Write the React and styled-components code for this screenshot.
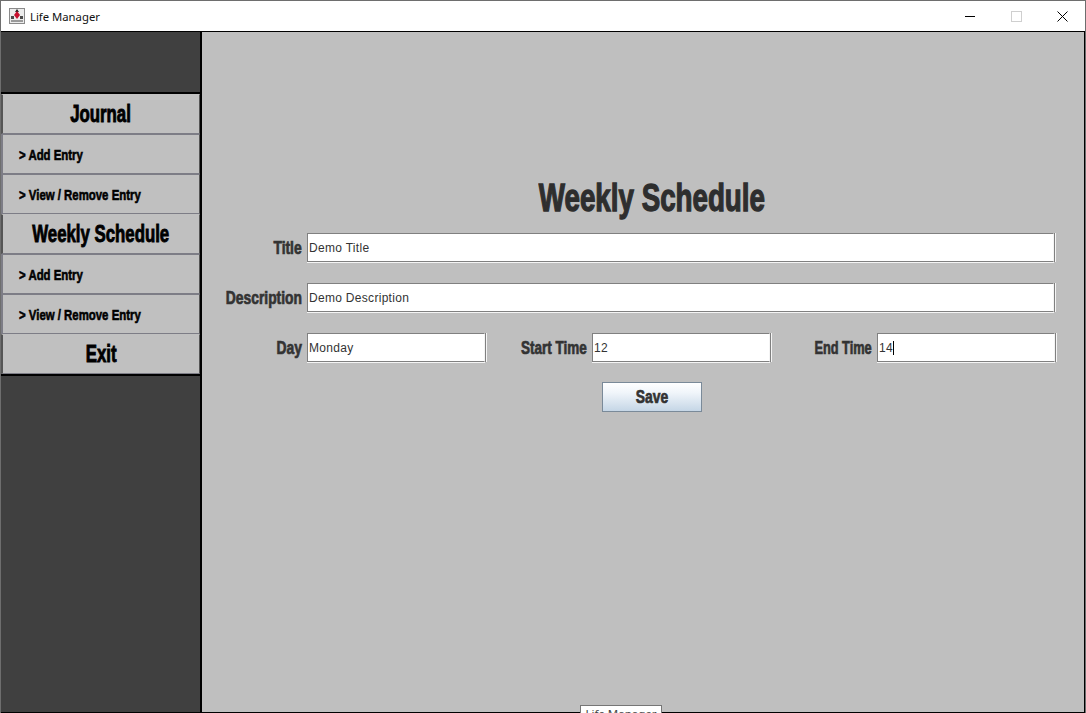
import styled, { createGlobalStyle } from "styled-components";

const impact = `"Liberation Sans", sans-serif`;

const GlobalStyle = createGlobalStyle`
  html, body {
    margin: 0;
    height: 100%;
    overflow: hidden;
  }
  #root {
    height: 100%;
  }
`;

const Frame = styled.div`
  position: relative;
  box-sizing: border-box;
  height: 713px;
  width: 1086px;
  display: flex;
  flex-direction: column;
  overflow: hidden;
  border: 1px solid #6e6e6e;
  border-bottom: none;
  background: #bfbfbf;
`;

const TitleBar = styled.div`
  height: 30px;
  flex: none;
  display: flex;
  align-items: center;
  background: #fff;
  border-bottom: 1px solid #000;
  box-sizing: content-box;
  padding-left: 8px;
  font: 11.3px "Noto Sans", "Open Sans", sans-serif;
  color: #111;
`;

const TitleText = styled.span`
  margin-left: 5px;
  flex: 1;
`;

const WindowButton = styled.div`
  width: 46px;
  height: 30px;
  display: flex;
  align-items: center;
  justify-content: center;
`;

const RestoreBox = styled.div`
  width: 9px;
  height: 9px;
  border: 1px solid #cfcfcf;
`;

// Impact is not installed, so the heavy narrow look comes from squeezing bold Arial
const Squeezed = styled.span`
  display: inline-block;
  white-space: nowrap;
  transform: scaleX(${(p) => p.$scale || 0.77});
  transform-origin: ${(p) => p.$origin || "center"};
`;

const Body = styled.div`
  flex: 1;
  display: flex;
  min-height: 0;
  border-right: 1px solid #000;
  border-bottom: 1px solid #000;
`;

const Sidebar = styled.nav`
  width: 199px;
  flex: none;
  background: #404040;
  border-right: 2px solid #000;
  display: flex;
  flex-direction: column;
  padding-top: 60px;
`;

const Menu = styled.div`
  border-top: 2px solid #000;
  border-bottom: 2px solid #000;
`;

const MenuItem = styled.div`
  box-sizing: border-box;
  height: 40px;
  display: flex;
  align-items: center;
  background: #c0c0c0;
  color: #000;
  font-family: ${impact};
  font-weight: 700;
  border: 1px solid #7d7d86;
  border-left-width: 2px;
  border-right-color: #555;
  ${(p) =>
    p.$heading
      ? `
    justify-content: center;
    font-size: 23px;
    -webkit-text-stroke: 0.9px #000;
    border-color: #c0c0c0 #555 #7d7d86 #555;
  `
      : `
    padding-left: 16px;
    font-size: 15px;
    -webkit-text-stroke: 0.6px #000;
  `}
`;

const Main = styled.main`
  flex: 1;
  min-width: 0;
  display: flex;
  flex-direction: column;
  padding: 146px 30px 0 0;
`;

const Heading = styled.h1`
  margin: 0 0 15px 47px;
  height: 40px;
  line-height: 40px;
  text-align: center;
  font-family: ${impact};
  font-weight: 700;
  font-size: 38px;
  color: #2e2e2e;
  -webkit-text-stroke: 1.3px #2e2e2e;
`;

const Row = styled.div`
  display: flex;
  align-items: center;
  gap: 5px;
  height: 28px;
  margin-bottom: 22px;
`;

const Label = styled.label`
  flex: none;
  width: ${(p) => p.$width || 100}px;
  padding-top: 2px;
  text-align: right;
  font-family: ${impact};
  font-weight: 700;
  font-size: 18px;
  color: #333;
  -webkit-text-stroke: 0.7px #333;
`;

const Input = styled.div`
  box-sizing: border-box;
  height: 29px;
  flex: ${(p) => (p.$wide ? 1 : "none")};
  width: ${(p) => (p.$wide ? "auto" : "178px")};
  display: flex;
  align-items: center;
  padding: 1px 0 0 1px;
  background: #fff;
  border: 1px solid;
  border-color: #808080 #f4f4f4 #808080 #808080;
  box-shadow: 0 1px 0 #f4f4f4, 1px 0 0 #808080, 2px 0 0 #f4f4f4;
  font: 12px "Liberation Sans", sans-serif;
  letter-spacing: 0.3px;
  color: #333;
`;

const Caret = styled.span`
  width: 1px;
  height: 14px;
  background: #000;
`;

const Actions = styled.div`
  display: flex;
  justify-content: center;
  padding-left: 47px;
  margin-top: -1px;
`;

const SaveButton = styled.button`
  box-sizing: border-box;
  width: 100px;
  height: 30px;
  padding: 1px 0 0 1px;
  border: 1px solid #7a8a99;
  background: linear-gradient(#ffffff 0%, #f0f5fa 35%, #c5d6e6 100%);
  font-family: ${impact};
  font-weight: 700;
  font-size: 18px;
  color: #333;
  -webkit-text-stroke: 0.7px #333;
`;

const Tooltip = styled.div`
  position: absolute;
  left: 579px;
  top: 704px;
  width: 82px;
  height: 20px;
  box-sizing: border-box;
  border: 1px solid #767676;
  background: #fff;
  text-align: center;
  font: 11.5px "Noto Sans", sans-serif;
  color: #444;
`;

function AppIcon() {
  return (
    <svg width="16" height="16" viewBox="0 0 16 16">
      <rect x="0.5" y="0.5" width="15" height="15" fill="#ececec" stroke="#8a8a8a" />
      <path d="M2 8h3v3H2zM11 8h3v3h-3z" fill="#4a4a4a" />
      <path d="M8 1l2 3H6z" fill="#222" />
      <path d="M8 3l3 4-3 4-3-4z" fill="#c8102e" />
      <rect x="2" y="12" width="12" height="2" fill="#9a9a9a" />
    </svg>
  );
}

function MinimizeIcon() {
  return (
    <svg width="10" height="10" viewBox="0 0 10 10">
      <path d="M0 5.5h10" stroke="#000" />
    </svg>
  );
}

function CloseIcon() {
  return (
    <svg width="11" height="11" viewBox="0 0 11 11">
      <path d="M0.5 0.5l10 10M10.5 0.5l-10 10" stroke="#000" />
    </svg>
  );
}

function FieldLabel({ width, scale, children }) {
  return (
    <Label $width={width}>
      <Squeezed $origin="right" $scale={scale}>
        {children}
      </Squeezed>
    </Label>
  );
}

function SectionItem({ children }) {
  return (
    <MenuItem $heading>
      <Squeezed $scale={0.73}>{children}</Squeezed>
    </MenuItem>
  );
}

function EntryItem({ children }) {
  return (
    <MenuItem>
      <Squeezed $origin="left" $scale={0.76}>
        &gt; {children}
      </Squeezed>
    </MenuItem>
  );
}

export default function App() {
  return (
    <Frame>
      <GlobalStyle />
      <TitleBar>
        <AppIcon />
        <TitleText>Life Manager</TitleText>
        <WindowButton>
          <MinimizeIcon />
        </WindowButton>
        <WindowButton>
          <RestoreBox />
        </WindowButton>
        <WindowButton>
          <CloseIcon />
        </WindowButton>
      </TitleBar>
      <Body>
        <Sidebar>
          <Menu>
            <SectionItem>Journal</SectionItem>
            <EntryItem>Add Entry</EntryItem>
            <EntryItem>View / Remove Entry</EntryItem>
            <SectionItem>Weekly Schedule</SectionItem>
            <EntryItem>Add Entry</EntryItem>
            <EntryItem>View / Remove Entry</EntryItem>
            <SectionItem>Exit</SectionItem>
          </Menu>
        </Sidebar>
        <Main>
          <Heading>
            <Squeezed $scale={0.73}>Weekly Schedule</Squeezed>
          </Heading>
          <Row>
            <FieldLabel>Title</FieldLabel>
            <Input $wide>Demo Title</Input>
          </Row>
          <Row>
            <FieldLabel>Description</FieldLabel>
            <Input $wide>Demo Description</Input>
          </Row>
          <Row>
            <FieldLabel>Day</FieldLabel>
            <Input>Monday</Input>
            <FieldLabel width={97} scale={0.75}>
              Start Time
            </FieldLabel>
            <Input>12</Input>
            <FieldLabel width={97} scale={0.71}>
              End Time
            </FieldLabel>
            <Input>
              14
              <Caret />
            </Input>
          </Row>
          <Actions>
            <SaveButton>
              <Squeezed>Save</Squeezed>
            </SaveButton>
          </Actions>
        </Main>
      </Body>
      <Tooltip>Life Manager</Tooltip>
    </Frame>
  );
}
